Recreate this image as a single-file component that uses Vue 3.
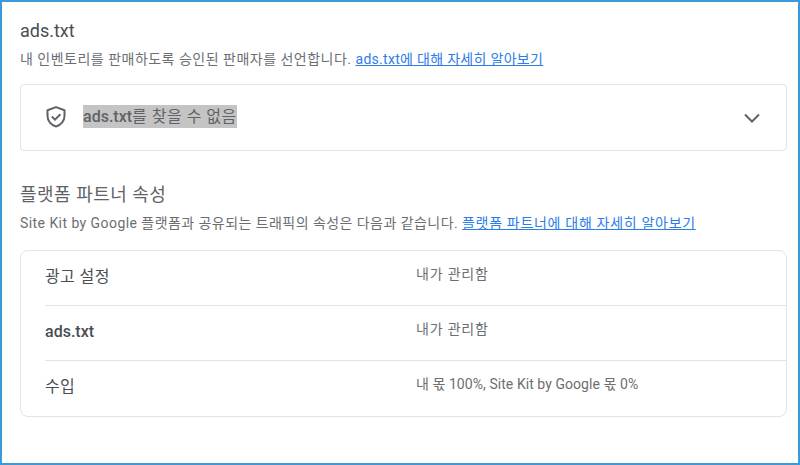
<template>
  <div class="frame">
    <section class="block">
      <h3 class="title">ads.txt</h3>
      <p class="desc">
        내 인벤토리를 판매하도록 승인된 판매자를 선언합니다.
        <a class="link" href="#">ads.txt에 대해 자세히 알아보기</a>
      </p>
      <div class="status-card">
        <svg class="shield" width="24" height="24" viewBox="1 1.5 24 24" fill="none">
          <path d="M12 2.6 3.5 5.8v5.8c0 4.9 3.7 9.2 8.5 10.4 4.8-1.2 8.5-5.500 8.5-10.4V5.8z" stroke="#5f6368" stroke-width="2" stroke-linejoin="round" />
          <path d="M7.8 12l3.2 3.2 5.4-5.4" stroke="#5f6368" stroke-width="2" />
        </svg>
        <span class="status-text"><span class="selected"><b>ads.txt</b>를 찾을 수 없음</span></span>
        <svg class="chevron" width="24" height="24" viewBox="0 0 24 24" fill="none">
          <path d="M5 8.5l7 7 7-7" stroke="#5f6368" stroke-width="2" />
        </svg>
      </div>
    </section>

    <section class="block partner">
      <h3 class="title large">플랫폼 파트너 속성</h3>
      <p class="desc">
        Site Kit by Google 플랫폼과 공유되는 트래픽의 속성은 다음과 같습니다.
        <a class="link" href="#">플랫폼 파트너에 대해 자세히 알아보기</a>
      </p>
      <div class="table-card">
        <div v-for="row in rows" :key="row.label" class="row">
          <div class="label" :class="{ bold: row.bold }">{{ row.label }}</div>
          <div class="value" :class="{ mixed: row.mixed }">{{ row.value }}</div>
        </div>
      </div>
    </section>
  </div>
</template>

<script setup>
const rows = [
  { label: "광고 설정", value: "내가 관리함" },
  { label: "ads.txt", value: "내가 관리함", bold: true },
  { label: "수입", value: "내 몫 100%, Site Kit by Google 몫 0%", mixed: true },
];
</script>

<style>
html,
body {
  margin: 0;
  background: #fff;
}
</style>

<style scoped>
.frame {
  box-sizing: border-box;
  width: 800px;
  height: 465px;
  border: 2px solid #3d9ad9;
  padding: 19px 11px 0 18px;
  background: #fff;
  font-family: Roboto, "Noto Sans CJK KR", sans-serif;
  color: #5f6368;
  overflow: hidden;
}

.title {
  margin: 0;
  font-size: 18px;
  line-height: 20px;
  font-weight: 400;
  color: #4a4e52;
}

.title.large {
  letter-spacing: 0.5px;
  line-height: 24px;
  color: #5f6368;
}

.desc {
  margin: 8px 0 0;
  font-size: 14px;
  line-height: 20px;
  letter-spacing: 0.49px;
  color: #6b6f74;
  white-space: nowrap;
}

.link {
  letter-spacing: 0.3px;
  color: #2b7de9;
  text-decoration: underline;
}

.status-card {
  display: flex;
  align-items: center;
  margin-top: 15px;
  height: 67px;
  box-sizing: border-box;
  border: 1px solid #e3e4e6;
  border-radius: 4px;
  padding: 0 22px 0 24px;
}

.shield {
  flex: none;
}

.status-text {
  flex: 1;
  margin-left: 14px;
  margin-bottom: 2px;
  font-size: 16px;
  letter-spacing: 0.5px;
  color: #5f6368;
}

.selected {
  display: inline-block;
  line-height: 23px;
  background: #c4c4c4;
}

.selected b {
  font-weight: 500;
  letter-spacing: 0;
}

.chevron {
  flex: none;
}

.partner {
  margin-top: 32px;
}

.partner .desc {
  margin-top: 6px;
  letter-spacing: 0.44px;
}

.partner .link {
  letter-spacing: 0.69px;
}

.table-card {
  margin-top: 17px;
  box-sizing: border-box;
  border: 1px solid #e3e4e6;
  border-radius: 8px;
  padding: 0 0 0 24px;
}

.row {
  display: flex;
  height: 55px;
  box-sizing: border-box;
  border-top: 1px solid #e3e4e6;
}

.row:first-child {
  height: 54px;
  border-top: 0;
}

.row:last-child {
  height: 56px;
}

.label {
  width: 371px;
  padding-top: 16px;
  font-size: 16px;
  line-height: 20px;
  letter-spacing: 0.4px;
  color: #4a4e52;
}

.label.bold {
  font-weight: 500;
  letter-spacing: 0;
}

.value {
  padding-top: 13px;
  font-size: 14px;
  line-height: 20px;
  letter-spacing: 0.8px;
  color: #6b6f74;
}

.value.mixed {
  letter-spacing: 0.06px;
}
</style>
